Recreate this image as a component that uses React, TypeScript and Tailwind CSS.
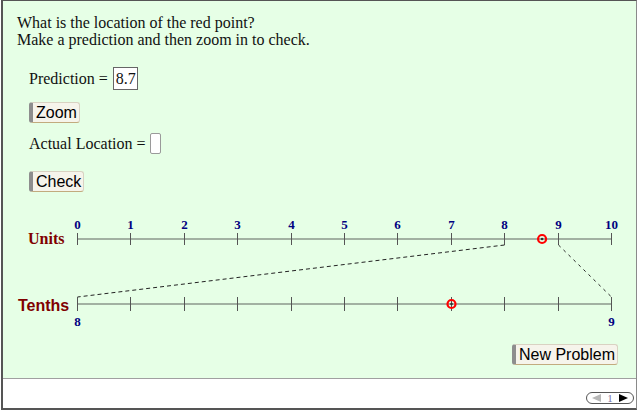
import React from "react";

const STEP = 53.4;
const tx = (i: number) => Math.round(77 + STEP * i) + 0.5;

function Btn({ children }: { children: React.ReactNode }) {
  return (
    <button className="flex items-center h-[21px] pl-[3px] pr-[2px] bg-[#f6f4eb] border border-[#d9d2c2] border-b-[#c2ab7e] border-l-4 border-l-[#8e8e8e] rounded-[3px] font-['Liberation_Sans',Arial,sans-serif] text-[16px] leading-none text-black">
      {children}
    </button>
  );
}

function RedPoint({ cx, cy }: { cx: number; cy: number }) {
  return (
    <g>
      <circle cx={cx} cy={cy} r={4} fill="none" stroke="#ff0000" strokeWidth={2.2} />
      <circle cx={cx} cy={cy} r={1.3} fill="#333" />
    </g>
  );
}

function Diagram() {
  const idx = Array.from({ length: 11 }, (_, i) => i);
  return (
    <svg width={633} height={118} viewBox="3 212 633 118" className="block">
      <text x={28} y={243} fontFamily="'Liberation Serif', serif" fontWeight="bold" fontSize={16} fill="#800000">
        Units
      </text>
      <line x1={77} y1={238} x2={612} y2={238} stroke="#a2b1a2" strokeWidth={2} />
      {idx.map((i) => (
        <g key={"u" + i}>
          <line x1={tx(i)} y1={232} x2={tx(i)} y2={244} stroke="#555" strokeWidth={1} />
          <text
            x={tx(i)}
            y={227.5}
            textAnchor="middle"
            fontFamily="'Liberation Serif', serif"
            fontWeight="bold"
            fontSize={13}
            fill="#000080"
          >
            {i}
          </text>
        </g>
      ))}
      <RedPoint cx={77 + STEP * 8.7 + 0.5} cy={238} />

      <line x1={tx(8)} y1={244} x2={tx(0)} y2={296} stroke="#222" strokeWidth={1} strokeDasharray="4 3" />
      <line x1={tx(9)} y1={244} x2={tx(10)} y2={296} stroke="#222" strokeWidth={1} strokeDasharray="3 4" />

      <text x={18} y={310} fontFamily="'Liberation Sans', Arial, sans-serif" fontWeight="bold" fontSize={16} fill="#800000">
        Tenths
      </text>
      <line x1={77} y1={303} x2={612} y2={303} stroke="#a2b1a2" strokeWidth={2} />
      {idx.map((i) => (
        <line key={"t" + i} x1={tx(i)} y1={296} x2={tx(i)} y2={310} stroke="#555" strokeWidth={1} />
      ))}
      <text x={tx(0)} y={324.5} textAnchor="middle" fontFamily="'Liberation Serif', serif" fontWeight="bold" fontSize={13} fill="#000080">
        8
      </text>
      <text x={tx(10)} y={324.5} textAnchor="middle" fontFamily="'Liberation Serif', serif" fontWeight="bold" fontSize={13} fill="#000080">
        9
      </text>
      <RedPoint cx={tx(7)} cy={303} />
    </svg>
  );
}

export default function App() {
  return (
    <div className="w-[640px] h-[412px] bg-white pl-px">
      <div className="w-[636px] h-[410px] flex flex-col border-l-2 border-t border-b-2 border-[#555] border-r border-r-[#8a8a8a]">
        <div className="h-[378px] bg-[#e6ffe6] border-b border-[#a0a0a0] flex flex-col font-['Liberation_Serif','Times_New_Roman',serif] text-[16px] text-[#111]">
          <div className="pl-[14px] pt-[13px] leading-[17px]">
            <div>What is the location of the red point?</div>
            <div>Make a prediction and then zoom in to check.</div>
          </div>
          <div className="pl-[26px] mt-[19px] flex items-center h-[23px]">
            <span>Prediction =</span>
            <span className="ml-[5px] h-[23px] w-[25px] flex items-center pl-[2px] bg-white border border-[#666] leading-none">
              8.7
            </span>
          </div>
          <div className="pl-[26px] mt-[12px] flex">
            <Btn>Zoom</Btn>
          </div>
          <div className="pl-[26px] mt-[10px] flex items-center h-[21px]">
            <span>Actual Location =</span>
            <span className="ml-[4px] h-[21px] w-[11px] bg-white border border-[#9a9a9a] rounded-[2px]" />
          </div>
          <div className="pl-[26px] mt-[17px] flex">
            <Btn>Check</Btn>
          </div>
          <div className="mt-[21px]">
            <Diagram />
          </div>
          <div className="mt-[13px] flex justify-end pr-[18px]">
            <Btn>New Problem</Btn>
          </div>
        </div>
        <div className="flex-1 bg-white flex justify-end items-start pt-[13px] pr-[2px]">
          <div className="w-[48px] h-[12px] rounded-full border border-[#555] flex items-center justify-between px-[5px]">
            <svg width={9} height={8} viewBox="0 0 9 8">
              <polygon points="9,0 9,8 0,4" fill="#b8b8b8" />
            </svg>
            <span className="font-['Liberation_Serif',serif] text-[11px] leading-none text-[#7a72a8]">1</span>
            <svg width={9} height={8} viewBox="0 0 9 8">
              <polygon points="0,0 0,8 9,4" fill="#000" />
            </svg>
          </div>
        </div>
      </div>
    </div>
  );
}
